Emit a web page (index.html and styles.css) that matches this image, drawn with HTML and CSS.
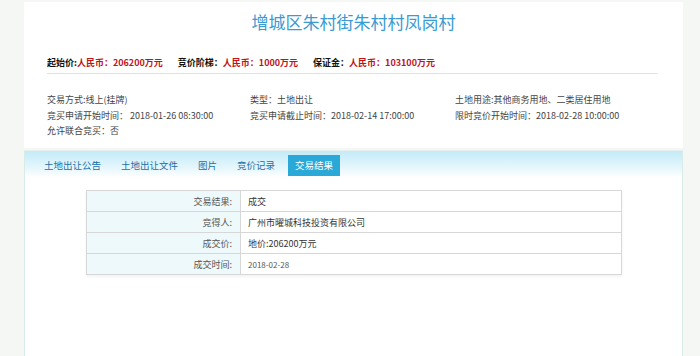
FILE: index.html
```html
<!DOCTYPE html>
<html lang="zh-CN">
<head>
  <meta charset="UTF-8" />
  <title>增城区朱村街朱村村凤岗村</title>
  <link rel="stylesheet" href="styles.css">
</head>
<body>
  <div class="page">
    <div class="top">
      <h1 class="title">增城区朱村街朱村村凤岗村</h1>
      <div class="prices">
        <span class="price"><b>起始价:</b><em>人民币：206200万元</em></span>
        <span class="price"><b>竞价阶梯：</b><em>人民币：1000万元</em></span>
        <span class="price"><b>保证金：</b><em>人民币：103100万元</em></span>
      </div>
      <div class="info">
        <div>交易方式:线上(挂牌)</div>
        <div>类型：土地出让</div>
        <div>土地用途:其他商务用地、二类居住用地</div>
        <div>竞买申请开始时间： 2018-01-26 08:30:00</div>
        <div>竞买申请截止时间：2018-02-14 17:00:00</div>
        <div>限时竞价开始时间：2018-02-28 10:00:00</div>
        <div>允许联合竞买：否</div>
      </div>
    </div>

    <div class="bottom">
      <div class="tabs">
        <span class="tab">土地出让公告</span>
        <span class="tab">土地出让文件</span>
        <span class="tab">图片</span>
        <span class="tab">竞价记录</span>
        <span class="tab active">交易结果</span>
      </div>
      <table class="result">
        <tr><th>交易结果:</th><td>成交</td></tr>
        <tr><th>竞得人:</th><td>广州市曜城科技投资有限公司</td></tr>
        <tr><th>成交价:</th><td>地价:206200万元</td></tr>
        <tr><th>成交时间:</th><td class="date">2018-02-28</td></tr>
      </table>
    </div>
  </div>
</body>
</html>
```

FILE: styles.css
```css
body {
  margin: 0;
  background: #f4f7f4;
  font-family: "Noto Sans CJK SC", "DejaVu Sans", sans-serif;
  color: #333;
}

.page {
  margin-left: 24px;
  width: 659px;
  padding-top: 2px;
}

.top {
  background: #fff;
  padding: 8px 25px 10px 23px;
  height: 128px;
}

.title {
  margin: 0;
  text-align: center;
  font-size: 17px;
  line-height: 24px;
  font-weight: normal;
  color: #3a9ad2;
  padding-left: 2px;
}

.prices {
  margin-top: 22px;
  padding-bottom: 3px;
  border-bottom: 1px solid #e2e2e2;
  font-size: 9px;
  line-height: 14px;
  display: flex;
  gap: 15px;
}

.price b {
  color: #111;
}

.price em {
  font-style: normal;
  font-weight: bold;
  color: #c1121a;
}

.info {
  margin-top: 18px;
  display: grid;
  grid-template-columns: 203px 205px 1fr;
  font-size: 9px;
  line-height: 15.5px;
  color: #444;
}

.bottom {
  margin-top: 2px;
  background: #fff;
  height: 210px;
  border-left: 1px solid #d9ebe6;
  border-right: 1px solid #d9ebe6;
  border-top: 1px solid #e6f1f0;
}

.tabs {
  display: flex;
  padding: 4px 0 2px 12px;
  height: 21px;
  background: linear-gradient(#c3ebf8, #e4f6fc 60%, #fff);
}

.tab {
  padding: 0 7px;
  margin-right: 6px;
  font-size: 9.5px;
  line-height: 21px;
  color: #1d6ea6;
}

.tab.active {
  background: #2aa8d7;
  color: #fff;
}

.result {
  margin: 12px 0 0 61px;
  width: 536px;
  border-collapse: collapse;
  font-size: 9px;
  box-shadow: 0 2px 3px rgba(0, 0, 0, 0.05);
}

.result th,
.result td {
  height: 20px;
  padding: 0;
  border: 1px solid #d7d7d7;
}

.result th {
  width: 145px;
  padding-right: 8px;
  text-align: right;
  font-weight: normal;
  background: #eef9fb;
  color: #555;
}

.result td {
  padding-left: 7px;
  color: #333;
}

.result td.date {
  font-size: 8px;
  color: #555;
}
```
